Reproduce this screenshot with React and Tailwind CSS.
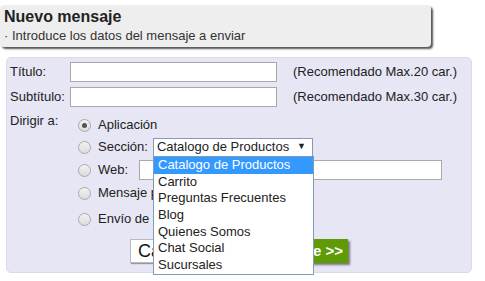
import { useState } from "react";

const opciones = [
  "Catalogo de Productos",
  "Carrito",
  "Preguntas Frecuentes",
  "Blog",
  "Quienes Somos",
  "Chat Social",
  "Sucursales",
];

function Radio({ checked }) {
  return (
    <span className="w-[13px] h-[13px] rounded-full border border-[#a9a9a9] bg-gradient-to-b from-[#f2f2f2] to-[#dcdcdc] flex items-center justify-center shrink-0">
      {checked && <span className="w-[5px] h-[5px] rounded-full bg-[#555]" />}
    </span>
  );
}

export default function App() {
  const [destino] = useState("app");

  return (
    <div className="w-[485px] h-[281px] bg-white text-[13px] text-[#222] font-['Liberation_Sans',Arial,sans-serif] overflow-hidden">
      {/* header */}
      <div className="mt-[5px] w-[431px] h-[42px] bg-[#eeeeee] rounded-[4px] shadow-[2px_2px_2px_#555] pl-[4px] pt-[3px]">
        <h1 className="text-[16px] font-bold leading-[18px] text-[#222]">Nuevo mensaje</h1>
        <p className="text-[13px] leading-[16px] mt-[2px] text-[#333]">
          · Introduce los datos del mensaje a enviar
        </p>
      </div>

      {/* form panel */}
      <div className="relative mt-[10px] ml-[6px] w-[466px] h-[216px] bg-[#e6e6f4] border border-[#dadaea] rounded-[5px] pt-[4px]">
        <div className="flex items-center h-[20px]">
          <span className="w-[63px] pl-[3px]">Título:</span>
          <span className="w-[207px] h-[20px] bg-white border border-[#a9a9a9]" />
          <span className="ml-[16px]">(Recomendado Max.20 car.)</span>
        </div>
        <div className="flex items-center h-[20px] mt-[5px]">
          <span className="w-[63px] pl-[3px]">Subtítulo:</span>
          <span className="w-[207px] h-[20px] bg-white border border-[#a9a9a9]" />
          <span className="ml-[16px]">(Recomendado Max.30 car.)</span>
        </div>

        <div className="flex mt-[3px]">
          <span className="w-[71px] pl-[3px] leading-[16px] pt-[3px]">Dirigir a:</span>
          <div className="flex flex-col">
            <div className="flex items-center h-[20px] mt-[5px] gap-[7px]">
              <Radio checked={destino === "app"} />
              <span>Aplicación</span>
            </div>
            <div className="flex items-center h-[20px] mt-[2px] gap-[7px]">
              <Radio />
              <span>Sección:</span>
              <span className="relative ml-[-2px] w-[160px] h-[19px] bg-white border border-[#7f9db9] flex items-center pl-[3px]">
                Catalogo de Productos
                <span className="absolute right-[6px] text-[9px]">▼</span>
              </span>
            </div>
            <div className="flex items-center h-[20px] mt-[3px] gap-[7px]">
              <Radio />
              <span>Web:</span>
              <span className="ml-[4px] w-[303px] h-[20px] bg-white border border-[#a9a9a9]" />
            </div>
            <div className="flex items-center h-[20px] mt-[3px] gap-[7px]">
              <Radio />
              <span>Mensaje personalizado</span>
            </div>
            <div className="flex items-center h-[20px] mt-[6px] gap-[7px]">
              <Radio />
              <span>Envío de notificación</span>
            </div>
          </div>
        </div>

        <div className="flex justify-center gap-[4px] mt-[10px]">
          <button className="w-[84px] h-[24px] pl-[7px] text-left bg-white border border-[#bbb] shadow-[1px_1px_1px_#999] text-[18px] leading-[20px] text-[#111]">
            Cancelar
          </button>
          <button className="w-[130px] h-[24px] pr-[5px] text-right bg-[#5f9a07] shadow-[2px_2px_2px_#777] text-white font-bold text-[15px]">
            Siguiente &gt;&gt;
          </button>
        </div>

        {/* open select list */}
        <ul className="absolute left-[146px] top-[98px] w-[161px] bg-white border border-[#7f9db9]">
          {opciones.map((o, i) => (
            <li
              key={o}
              className={
                i === 0
                  ? "h-[16.7px] leading-[16.7px] pl-[4px] bg-[#3399ff] text-white"
                  : "h-[16.7px] leading-[16.7px] pl-[4px]"
              }
            >
              {o}
            </li>
          ))}
        </ul>
      </div>
    </div>
  );
}
